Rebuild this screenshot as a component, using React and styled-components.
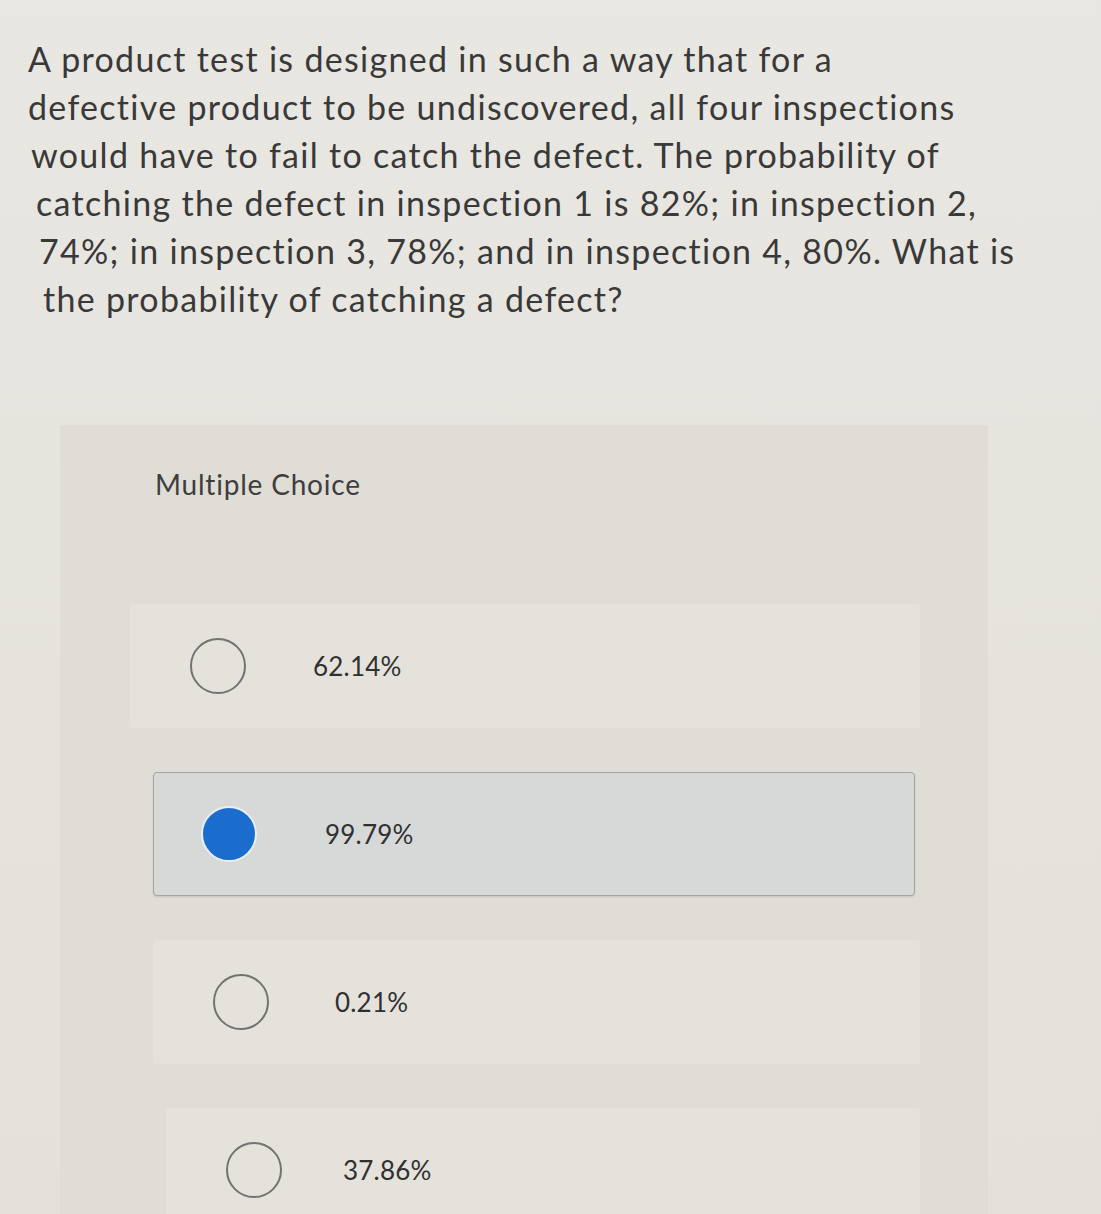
import React from 'react';
import styled, { createGlobalStyle } from 'styled-components';

const GlobalStyle = createGlobalStyle`
  html, body {
    margin: 0;
    padding: 0;
    background: #e8e6e1;
  }
  body {
    font-family: Lato, "Open Sans", "Liberation Sans", sans-serif;
    color: #353535;
  }
`;

const Page = styled.div`
  width: 1101px;
  height: 1214px;
  overflow: hidden;
  background: linear-gradient(180deg, #e9e7e2 0%, #e6e3dd 60%, #e4e1da 100%);
`;

const Question = styled.div`
  padding: 35px 0 0 28px;
  font-size: 34px;
  line-height: 48px;
  color: #393939;
  letter-spacing: 1.3px;
`;

const Line = styled.span`
  display: block;
  padding-left: ${(p) => p.$indent || 0}px;
  white-space: nowrap;
`;

const Panel = styled.section`
  margin: 102px 0 0 60px;
  width: 928px;
  min-height: 800px;
  background: #e0ddd7;
  padding-top: 43px;
`;

const Heading = styled.h2`
  margin: 0 0 0 95px;
  font-size: 28px;
  line-height: 32px;
  font-weight: 400;
  color: #3e3e3e;
  letter-spacing: 0.8px;
`;

const Options = styled.div`
  display: flex;
  flex-direction: column;
  gap: 44px;
  margin-top: 104px;
`;

const Option = styled.label`
  display: flex;
  align-items: center;
  box-sizing: border-box;
  height: 124px;
  margin-left: ${(p) => (p.$selected ? 93 : 70 + p.$shift)}px;
  width: ${(p) => (p.$selected ? 762 : 790 - p.$shift)}px;
  padding-left: 60px;
  background: ${(p) => (p.$selected ? '#d7d9d8' : '#e5e2dc')};
  border: ${(p) => (p.$selected ? '1px solid #a4a5a4' : 'none')};
  border-radius: 4px;
  box-shadow: ${(p) => (p.$selected ? '0 1px 2px rgba(0,0,0,0.12)' : 'none')};
  cursor: pointer;
`;

const Radio = styled.span`
  flex: none;
  box-sizing: border-box;
  width: 56px;
  height: 56px;
  border-radius: 50%;
  margin-left: ${(p) => (p.$checked ? -13 : 0)}px;
  border: ${(p) => (p.$checked ? '2px solid #e8eef5' : '2px solid #727272')};
  background: ${(p) => (p.$checked ? '#1b6dcd' : 'transparent')};
`;

const Label = styled.span`
  margin-left: ${(p) => p.$gap}px;
  font-size: 26px;
  color: #303030;
  letter-spacing: 0.2px;
`;

const lines = [
  { text: 'A product test is designed in such a way that for a', indent: 0 },
  { text: 'defective product to be undiscovered, all four inspections', indent: 0 },
  { text: 'would have to fail to catch the defect. The probability of', indent: 3 },
  { text: 'catching the defect in inspection 1 is 82%; in inspection 2,', indent: 8 },
  { text: '74%; in inspection 3, 78%; and in inspection 4, 80%. What is', indent: 11 },
  { text: 'the probability of catching a defect?', indent: 15 },
];

const choices = [
  { label: '62.14%', shift: 0, gap: 67 },
  { label: '99.79%', shift: 0, gap: 68, selected: true },
  { label: '0.21%', shift: 23, gap: 66 },
  { label: '37.86%', shift: 36, gap: 61 },
];

export default function App() {
  return (
    <Page>
      <GlobalStyle />
      <Question>
        {lines.map((l) => (
          <Line key={l.text} $indent={l.indent}>
            {l.text}
          </Line>
        ))}
      </Question>
      <Panel>
        <Heading>Multiple Choice</Heading>
        <Options>
          {choices.map((c) => (
            <Option key={c.label} $selected={c.selected} $shift={c.selected ? 0 : c.shift}>
              <Radio $checked={c.selected} />
              <Label $gap={c.gap}>{c.label}</Label>
            </Option>
          ))}
        </Options>
      </Panel>
    </Page>
  );
}
